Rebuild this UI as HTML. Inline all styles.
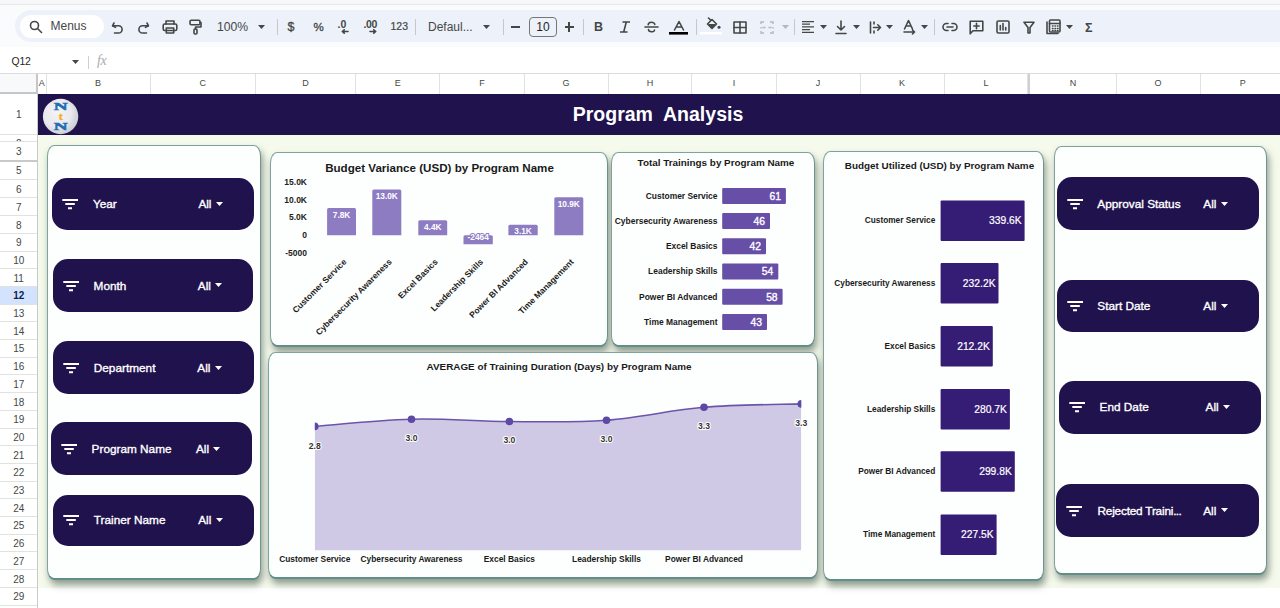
<!DOCTYPE html><html><head><meta charset="utf-8"><title>Program Analysis</title><style>
*{margin:0;padding:0;box-sizing:border-box}
html,body{width:1280px;height:608px;overflow:hidden;background:#fff;position:relative;font-family:"Liberation Sans",sans-serif}
.a{position:absolute}
.rh{position:absolute;left:0;width:37.5px;border-bottom:1px solid #e1e3e1;background:#fff;color:#444746;font-size:10px;text-align:center;overflow:hidden}
.rh span{position:absolute;left:0;right:0;top:50%;transform:translateY(-45%);line-height:12px}
.rh.sel{background:#d3e3fd;color:#0b1f4d;font-weight:bold}
.ch{position:absolute;top:73.5px;height:20px;border-right:1px solid #e1e3e1;color:#444746;font-size:9px;text-align:center;line-height:19.5px;background:#fff}
.card{position:absolute;background:#fdfffe;border:1.3px solid #7ea39c;border-right:1.6px solid #6f948e;border-bottom:2px solid #5f8f88;border-radius:7px/11px;box-shadow:2px 5px 7px rgba(60,80,70,.55)}
.chip{position:absolute;background:#20124d;border-radius:15px;color:#fff}
.chip .lb{position:absolute;font-size:11.8px;line-height:14px;-webkit-text-stroke:0.35px #fff;white-space:nowrap}
.chip .al{position:absolute;font-size:11.8px;line-height:14px;-webkit-text-stroke:0.35px #fff}
.ico{position:absolute}
.tb{position:absolute;color:#444746;white-space:nowrap}
.sep{position:absolute;top:18.7px;width:1px;height:16.6px;background:#c7c7c7}
</style></head><body>
<div class="a" style="left:0;top:0;width:1280px;height:4.5px;background:#f6f7f8;border-bottom:1px solid #e6e8ea"></div>
<div class="a" style="left:0;top:5px;width:1280px;height:42px;background:#f9fbfd"></div>
<div class="a" style="left:15px;top:10px;width:1300px;height:32px;background:#edf2fa;border-radius:16px"></div>
<div class="a" style="left:20px;top:15px;width:84px;height:23px;background:#fff;border-radius:12px"></div>
<svg class="ico" style="left:29px;top:20px" width="14" height="14" viewBox="0 0 14 14"><circle cx="5.5" cy="5.5" r="4" fill="none" stroke="#444746" stroke-width="1.6" stroke-linecap="round" stroke-linejoin="round"/><path d="M8.5 8.5 L12.5 12.5" fill="none" stroke="#444746" stroke-width="1.6" stroke-linecap="round" stroke-linejoin="round" stroke-width="1.8"/></svg>
<div class="tb" style="left:50.5px;top:18px;font-size:12px;line-height:16px;color:#444746">Menus</div>
<svg class="ico" style="left:111px;top:21px" width="13" height="13" viewBox="0 0 13 13"><path d="M3 2 L1.5 4.8 L4.5 6.3" fill="none" stroke="#444746" stroke-width="1.6" stroke-linecap="round" stroke-linejoin="round" stroke-width="1.5"/><path d="M1.8 4.8 H7.5 A3.6 3.6 0 0 1 7.5 12 H3.5" fill="none" stroke="#444746" stroke-width="1.6" stroke-linecap="round" stroke-linejoin="round" stroke-width="1.5"/></svg>
<svg class="ico" style="left:137px;top:21px" width="13" height="13" viewBox="0 0 13 13"><path d="M10 2 L11.5 4.8 L8.5 6.3" fill="none" stroke="#444746" stroke-width="1.6" stroke-linecap="round" stroke-linejoin="round" stroke-width="1.5"/><path d="M11.2 4.8 H5.5 A3.6 3.6 0 0 0 5.5 12 H9.5" fill="none" stroke="#444746" stroke-width="1.6" stroke-linecap="round" stroke-linejoin="round" stroke-width="1.5"/></svg>
<svg class="ico" style="left:162px;top:19px" width="16" height="16" viewBox="0 0 16 16"><path d="M4 5 V2 H12 V5" fill="none" stroke="#444746" stroke-width="1.6" stroke-linecap="round" stroke-linejoin="round" stroke-width="1.5"/><rect x="1.2" y="5" width="13.6" height="6.5" rx="1.5" fill="none" stroke="#444746" stroke-width="1.6" stroke-linecap="round" stroke-linejoin="round" stroke-width="1.5"/><rect x="4.3" y="9" width="7.4" height="5" fill="none" stroke="#444746" stroke-width="1.6" stroke-linecap="round" stroke-linejoin="round" stroke-width="1.5" fill="#edf2fa"/></svg>
<svg class="ico" style="left:189px;top:19px" width="13" height="16" viewBox="0 0 13 16"><rect x="1" y="1.2" width="10" height="4.5" rx="1.2" fill="none" stroke="#444746" stroke-width="1.6" stroke-linecap="round" stroke-linejoin="round" stroke-width="1.5"/><path d="M11 3.5 H12 V8 H6.5 V10" fill="none" stroke="#444746" stroke-width="1.6" stroke-linecap="round" stroke-linejoin="round" stroke-width="1.5"/><rect x="5" y="10" width="3" height="5" rx="1" fill="none" stroke="#444746" stroke-width="1.6" stroke-linecap="round" stroke-linejoin="round" stroke-width="1.5"/></svg>
<div class="tb" style="left:217px;top:19px;font-size:12.2px;line-height:16px">100%</div>
<svg class="ico" style="left:257.5px;top:25px" width="7" height="4" viewBox="0 0 7 4"><path d="M0 0 H7 L3.5 4 Z" fill="#444746"/></svg>
<div class="sep" style="left:276.5px"></div>
<div class="tb" style="left:287.5px;top:18.5px;font-size:12.5px;line-height:16px;-webkit-text-stroke:0.3px #444746">$</div>
<div class="tb" style="left:313.5px;top:18.5px;font-size:11.5px;line-height:16px;-webkit-text-stroke:0.3px #444746">%</div>
<div class="tb" style="left:337.5px;top:15.5px;font-size:10.5px;line-height:16px;font-weight:bold">.0</div>
<svg class="ico" style="left:341px;top:29px" width="8" height="5" viewBox="0 0 8 5"><path d="M7 2.5 H1.5 M3.2 0.8 L1.3 2.5 L3.2 4.2" fill="none" stroke="#444746" stroke-width="1.6" stroke-linecap="round" stroke-linejoin="round" stroke-width="1.2"/></svg>
<div class="tb" style="left:363.5px;top:15.5px;font-size:10.5px;line-height:16px;font-weight:bold;letter-spacing:-0.4px">.00</div>
<svg class="ico" style="left:369px;top:29px" width="8" height="5" viewBox="0 0 8 5"><path d="M1 2.5 H6.5 M4.8 0.8 L6.7 2.5 L4.8 4.2" fill="none" stroke="#444746" stroke-width="1.6" stroke-linecap="round" stroke-linejoin="round" stroke-width="1.2"/></svg>
<div class="tb" style="left:390.5px;top:18px;font-size:10.5px;line-height:16px;-webkit-text-stroke:0.2px #444746">123</div>
<div class="sep" style="left:414.5px"></div>
<div class="tb" style="left:428px;top:18.5px;font-size:12px;line-height:16px">Defaul...</div>
<svg class="ico" style="left:483px;top:25px" width="7" height="4" viewBox="0 0 7 4"><path d="M0 0 H7 L3.5 4 Z" fill="#444746"/></svg>
<div class="sep" style="left:503px"></div>
<div class="a" style="left:511px;top:26.3px;width:9px;height:1.3px;background:#444746"></div>
<div class="a" style="left:529px;top:17px;width:28px;height:19.5px;border:1px solid #747775;border-radius:4px;font-size:12px;line-height:19px;text-align:center;color:#1f1f1f">10</div>
<div class="a" style="left:564.5px;top:26.3px;width:9px;height:1.3px;background:#444746"></div><div class="a" style="left:568.4px;top:22.2px;width:1.3px;height:9.4px;background:#444746"></div>
<div class="sep" style="left:582.5px"></div>
<div class="tb" style="left:594px;top:18.5px;font-size:12.5px;line-height:16px;font-weight:bold">B</div>
<svg class="ico" style="left:620px;top:21px" width="10" height="12" viewBox="0 0 10 12"><path d="M3 1 H9.5 M0.5 11 H7 M6.3 1 L3.7 11" fill="none" stroke="#444746" stroke-width="1.6" stroke-linecap="round" stroke-linejoin="round" stroke-width="1.8" stroke-linecap="butt"/></svg>
<svg class="ico" style="left:644px;top:20px" width="15" height="14" viewBox="0 0 15 14"><path d="M1 7 H14" fill="none" stroke="#444746" stroke-width="1.6" stroke-linecap="round" stroke-linejoin="round" stroke-width="1.5"/><path d="M4.2 4.8 C4.2 1.5 10.8 1.5 10.8 4.5 M4.5 9.5 C4.5 12.5 10.5 12.5 10.5 10" fill="none" stroke="#444746" stroke-width="1.6" stroke-linecap="round" stroke-linejoin="round" stroke-width="1.5"/></svg>
<svg class="ico" style="left:669px;top:20px" width="20" height="15" viewBox="0 0 20 15"><path d="M5.5 10 L10 1.5 L14.5 10 M7.2 7 H12.8" fill="none" stroke="#444746" stroke-width="1.6" stroke-linecap="round" stroke-linejoin="round" stroke-width="1.5"/><rect x="0" y="12" width="19" height="2.6" fill="#000"/></svg>
<div class="sep" style="left:695.5px"></div>
<svg class="ico" style="left:700px;top:17px" width="23" height="19" viewBox="0 0 23 19"><path d="M8.5 1 L10.5 3" fill="none" stroke="#444746" stroke-width="1.6" stroke-linecap="round" stroke-linejoin="round" stroke-width="1.4"/><path d="M7.5 7 L12 2.5 L16.5 7 L12 11.5 Z" fill="none" stroke="#444746" stroke-width="1.6" stroke-linecap="round" stroke-linejoin="round" stroke-width="1.5"/><path d="M7.8 7 L16.2 7 L12 11.2 Z" fill="#444746"/><circle cx="19" cy="10.3" r="1.5" fill="#444746"/><rect x="0" y="15" width="22" height="2.4" fill="#fff"/></svg>
<svg class="ico" style="left:733px;top:21px" width="14" height="13" viewBox="0 0 14 13"><rect x="1" y="1" width="12" height="11" fill="none" stroke="#444746" stroke-width="1.6" stroke-linecap="round" stroke-linejoin="round" stroke-width="1.6"/><path d="M7 1 V12 M1 6.5 H13" fill="none" stroke="#444746" stroke-width="1.6" stroke-linecap="round" stroke-linejoin="round" stroke-width="1.6"/></svg>
<svg class="ico" style="left:760px;top:21px" width="14" height="13" viewBox="0 0 14 13"><path d="M1 3 V1 H4 M1 10 V12 H4 M13 3 V1 H10 M13 10 V12 H10 M1 6 V7.5 M13 6 V7.5 M2.5 6.5 H5.5 M11.5 6.5 H8.5" fill="none" stroke="#b4b7bb" stroke-width="1.4"/></svg>
<svg class="ico" style="left:781.5px;top:25px" width="7" height="4" viewBox="0 0 7 4"><path d="M0 0 H7 L3.5 4 Z" fill="#b4b7bb"/></svg>
<div class="sep" style="left:793.5px"></div>
<svg class="ico" style="left:801px;top:20px" width="14" height="14" viewBox="0 0 14 14"><path d="M1 1.5 H13 M1 4.2 H9 M1 6.9 H13 M1 9.6 H9 M1 12.3 H13" fill="none" stroke="#444746" stroke-width="1.25"/></svg>
<svg class="ico" style="left:819.5px;top:25px" width="7" height="4" viewBox="0 0 7 4"><path d="M0 0 H7 L3.5 4 Z" fill="#444746"/></svg>
<svg class="ico" style="left:835px;top:20px" width="12" height="15" viewBox="0 0 12 15"><path d="M6 1 V10 M2.5 6.5 L6 10 L9.5 6.5 M1 13.5 H11" fill="none" stroke="#444746" stroke-width="1.6" stroke-linecap="round" stroke-linejoin="round" stroke-width="1.6"/></svg>
<svg class="ico" style="left:852.5px;top:25px" width="7" height="4" viewBox="0 0 7 4"><path d="M0 0 H7 L3.5 4 Z" fill="#444746"/></svg>
<svg class="ico" style="left:869px;top:21px" width="13" height="13" viewBox="0 0 13 13"><path d="M1.5 1 V12 M4.5 6.5 H11.5 M8.8 3.8 L11.5 6.5 L8.8 9.2 M5 1 V3 M5 10 V12" fill="none" stroke="#444746" stroke-width="1.6" stroke-linecap="round" stroke-linejoin="round" stroke-width="1.6"/></svg>
<svg class="ico" style="left:885.5px;top:25px" width="7" height="4" viewBox="0 0 7 4"><path d="M0 0 H7 L3.5 4 Z" fill="#444746"/></svg>
<svg class="ico" style="left:903px;top:19px" width="13" height="16" viewBox="0 0 13 16"><path d="M1.5 10 L5.5 1.5 L9.5 10 M3 7 H8 M1 13 H11 M9.5 11 L11.5 13 L9.5 15" fill="none" stroke="#444746" stroke-width="1.6" stroke-linecap="round" stroke-linejoin="round" stroke-width="1.5"/></svg>
<svg class="ico" style="left:920.5px;top:25px" width="7" height="4" viewBox="0 0 7 4"><path d="M0 0 H7 L3.5 4 Z" fill="#444746"/></svg>
<div class="sep" style="left:934.3px"></div>
<svg class="ico" style="left:942px;top:22px" width="16" height="10" viewBox="0 0 16 10"><path d="M6 1.5 H4.5 A3.5 3.5 0 0 0 4.5 8.5 H6 M10 1.5 H11.5 A3.5 3.5 0 0 1 11.5 8.5 H10 M5 5 H11" fill="none" stroke="#444746" stroke-width="1.6" stroke-linecap="round" stroke-linejoin="round" stroke-width="1.7"/></svg>
<svg class="ico" style="left:969px;top:20px" width="15" height="15" viewBox="0 0 15 15"><path d="M1.2 1.2 H13.8 V10.8 H4 L1.2 13.8 Z" fill="none" stroke="#444746" stroke-width="1.6" stroke-linecap="round" stroke-linejoin="round" stroke-width="1.5"/><path d="M7.5 3.3 V8.7 M4.8 6 H10.2" fill="none" stroke="#444746" stroke-width="1.6" stroke-linecap="round" stroke-linejoin="round" stroke-width="1.6"/></svg>
<svg class="ico" style="left:996px;top:20px" width="14" height="14" viewBox="0 0 14 14"><rect x="1" y="1" width="12" height="12" rx="1.2" fill="none" stroke="#444746" stroke-width="1.6" stroke-linecap="round" stroke-linejoin="round" stroke-width="1.5"/><path d="M4.3 5.5 V10 M7 3.5 V10 M9.7 7.5 V10" fill="none" stroke="#444746" stroke-width="1.6" stroke-linecap="round" stroke-linejoin="round" stroke-width="1.5"/></svg>
<svg class="ico" style="left:1023px;top:21px" width="12" height="13" viewBox="0 0 12 13"><path d="M1 1.2 H11 L7 6.5 V12 H5 V6.5 Z" fill="none" stroke="#444746" stroke-width="1.6" stroke-linecap="round" stroke-linejoin="round" stroke-width="1.5"/></svg>
<svg class="ico" style="left:1046px;top:19px" width="15" height="16" viewBox="0 0 15 16"><path d="M1 3 V14.5 H12" fill="none" stroke="#444746" stroke-width="1.6" stroke-linecap="round" stroke-linejoin="round" stroke-width="1.5"/><rect x="3.5" y="1" width="10.5" height="12" rx="1" fill="none" stroke="#444746" stroke-width="1.6" stroke-linecap="round" stroke-linejoin="round" stroke-width="1.5"/><path d="M3.5 4.5 H14 M6.5 7 H7 M9 7 H9.5 M11.5 7 H12 M6.5 9.5 H7 M9 9.5 H9.5 M11.5 9.5 H12 M6.5 11.5 H7 M9 11.5 H9.5 M11.5 11.5 H12" fill="none" stroke="#444746" stroke-width="1.6" stroke-linecap="round" stroke-linejoin="round" stroke-width="1.6"/></svg>
<svg class="ico" style="left:1066px;top:25px" width="7" height="4" viewBox="0 0 7 4"><path d="M0 0 H7 L3.5 4 Z" fill="#444746"/></svg>
<div class="tb" style="left:1085px;top:19.5px;font-size:12.5px;line-height:16px;font-weight:bold">&#931;</div>
<div class="tb" style="left:11.5px;top:54.8px;font-size:10.4px;line-height:13px;color:#1f1f1f;letter-spacing:-0.2px">Q12</div>
<svg class="ico" style="left:71.5px;top:59.5px" width="7" height="4" viewBox="0 0 7 4"><path d="M0 0 H7 L3.5 4 Z" fill="#444746"/></svg>
<div class="a" style="left:87.5px;top:55.7px;width:1px;height:13px;background:#d0d0d0"></div>
<div class="tb" style="left:97px;top:53px;font-size:14px;line-height:15px;font-family:'Liberation Serif',serif;font-style:italic;color:#a8acb0;letter-spacing:-0.5px">fx</div>
<div class="a" style="left:0;top:73px;width:1280px;height:1px;background:#dadce0"></div>
<div class="ch" style="left:38px;width:8.5px">A</div>
<div class="ch" style="left:46.5px;width:104.0px">B</div>
<div class="ch" style="left:150.5px;width:105.30000000000001px">C</div>
<div class="ch" style="left:255.8px;width:100.39999999999998px">D</div>
<div class="ch" style="left:356.2px;width:84.30000000000001px">E</div>
<div class="ch" style="left:440.5px;width:84.0px">F</div>
<div class="ch" style="left:524.5px;width:84.20000000000005px">G</div>
<div class="ch" style="left:608.7px;width:83.79999999999995px">H</div>
<div class="ch" style="left:692.5px;width:84.0px">I</div>
<div class="ch" style="left:776.5px;width:84.0px">J</div>
<div class="ch" style="left:860.5px;width:84.0px">K</div>
<div class="ch" style="left:944.5px;width:83.79999999999995px">L</div>
<div class="ch" style="left:1030.5px;width:86.0px">N</div>
<div class="ch" style="left:1116.5px;width:84.0px">O</div>
<div class="ch" style="left:1200.5px;width:85.5px">P</div>
<div class="a" style="left:1028.3px;top:73.5px;width:2.2px;height:20px;border-left:1px solid #d0d0d0;border-right:1px solid #d0d0d0;background:#fff"></div>
<div class="a" style="left:0;top:73.5px;width:38px;height:20px;background:#f8f9fa;border-right:2.5px solid #c4c7c5;border-bottom:2.5px solid #c4c7c5"></div>
<div class="rh" style="top:93.5px;height:41.3px"><span>1</span></div>
<div class="rh" style="top:134.8px;height:7.3px"><span style="top:3px;transform:none">2</span></div>
<div class="rh" style="top:142.1px;height:18.8px"><span>3</span></div>
<div class="rh" style="top:160.9px;height:19.4px"><span>5</span></div>
<div class="rh" style="top:180.3px;height:18.2px"><span>6</span></div>
<div class="rh" style="top:198.5px;height:17.7px"><span>7</span></div>
<div class="rh" style="top:216.2px;height:17.7px"><span>8</span></div>
<div class="rh" style="top:233.9px;height:17.7px"><span>9</span></div>
<div class="rh" style="top:251.6px;height:17.7px"><span>10</span></div>
<div class="rh" style="top:269.3px;height:17.7px"><span>11</span></div>
<div class="rh sel" style="top:287.0px;height:17.7px"><span>12</span></div>
<div class="rh" style="top:304.7px;height:17.7px"><span>13</span></div>
<div class="rh" style="top:322.4px;height:17.7px"><span>14</span></div>
<div class="rh" style="top:340.1px;height:17.7px"><span>15</span></div>
<div class="rh" style="top:357.8px;height:17.7px"><span>16</span></div>
<div class="rh" style="top:375.5px;height:17.7px"><span>17</span></div>
<div class="rh" style="top:393.2px;height:17.7px"><span>18</span></div>
<div class="rh" style="top:410.9px;height:17.7px"><span>19</span></div>
<div class="rh" style="top:428.6px;height:17.7px"><span>20</span></div>
<div class="rh" style="top:446.3px;height:17.7px"><span>21</span></div>
<div class="rh" style="top:464.0px;height:17.7px"><span>22</span></div>
<div class="rh" style="top:481.7px;height:17.7px"><span>23</span></div>
<div class="rh" style="top:499.4px;height:17.7px"><span>24</span></div>
<div class="rh" style="top:517.1px;height:17.7px"><span>25</span></div>
<div class="rh" style="top:534.8px;height:17.7px"><span>26</span></div>
<div class="rh" style="top:552.5px;height:17.7px"><span>27</span></div>
<div class="rh" style="top:570.2px;height:17.7px"><span>28</span></div>
<div class="rh" style="top:587.9px;height:17.7px"><span>29</span></div>
<div class="a" style="left:37px;top:93.5px;width:1px;height:520px;background:#c8cacc"></div>
<div class="a" style="left:0;top:159.9px;width:37px;height:2px;background:#c7c9cb"></div>
<div class="a" style="left:38px;top:93.5px;width:1242px;height:494.1px;background:#f5faec"></div>
<div class="a" style="left:38px;top:587.6px;width:1242px;height:30px;background:#fff"></div>
<div class="a" style="left:38px;top:93.5px;width:1242px;height:41.2px;background:#20124d"></div>
<div class="a" style="left:500px;top:103px;width:316px;text-align:center;color:#fff;font-weight:bold;font-size:19.5px;line-height:22px;white-space:pre">Program  Analysis</div>
<svg class="ico" style="left:42px;top:98px" width="38" height="38" viewBox="0 0 38 38">
<defs><radialGradient id="lg" cx="40%" cy="40%" r="65%"><stop offset="0" stop-color="#f4f4f6"/><stop offset="0.6" stop-color="#e9e9ee"/><stop offset="1" stop-color="#c9c9d2"/></radialGradient></defs>
<circle cx="18.6" cy="18.5" r="17.7" fill="url(#lg)"/>
<text transform="translate(18.6,11.9) scale(1.75,1)" text-anchor="middle" font-family="Liberation Serif" font-weight="bold" font-size="11" fill="#1f6fb2" stroke="#1f6fb2" stroke-width="0.5">N</text>
<text transform="translate(18.8,22.3) scale(1.2,1)" text-anchor="middle" font-family="Liberation Serif" font-weight="bold" font-size="10" fill="#f1b320" stroke="#f1b320" stroke-width="0.4">t</text>
<text transform="translate(18.6,32.4) scale(1.75,1)" text-anchor="middle" font-family="Liberation Serif" font-weight="bold" font-size="11" fill="#1f6fb2" stroke="#1f6fb2" stroke-width="0.5">N</text>
</svg>
<div class="card" style="left:47px;top:144.8px;width:214px;height:435.2px"></div>
<div class="card" style="left:1053.5px;top:145.6px;width:213.5px;height:429.9px"></div>
<div class="card" style="left:270px;top:152px;width:337.5px;height:195px"></div>
<div class="card" style="left:611px;top:152px;width:204px;height:195px"></div>
<div class="card" style="left:268px;top:352px;width:549.5px;height:226.5px"></div>
<div class="card" style="left:823.3px;top:150.6px;width:221.20000000000005px;height:430.4px"></div>
<div class="chip" style="left:51.7px;top:177.5px;width:202.10000000000002px;height:52.5px"><svg class="ico" style="left:10.699999999999996px;top:21.25px" width="17" height="11" viewBox="0 0 17 11"><path d="M0.3 1 H16 M3.3 5 H12.8 M6 9.3 H10" stroke="#fff" stroke-width="2.1"/></svg><div class="lb" style="left:41.2px;top:19.25px">Year</div><div class="al" style="left:146.7px;top:19.25px">All</div><svg class="ico" style="left:164.2px;top:24.05px" width="7" height="4" viewBox="0 0 7 4"><path d="M0 0 H7 L3.5 4 Z" fill="#fff"/></svg></div>
<div class="chip" style="left:53px;top:259.3px;width:200px;height:52.69999999999999px"><svg class="ico" style="left:9.799999999999997px;top:21.349999999999994px" width="17" height="11" viewBox="0 0 17 11"><path d="M0.3 1 H16 M3.3 5 H12.8 M6 9.3 H10" stroke="#fff" stroke-width="2.1"/></svg><div class="lb" style="left:40.599999999999994px;top:19.349999999999994px">Month</div><div class="al" style="left:144.8px;top:19.349999999999994px">All</div><svg class="ico" style="left:162.3px;top:24.149999999999995px" width="7" height="4" viewBox="0 0 7 4"><path d="M0 0 H7 L3.5 4 Z" fill="#fff"/></svg></div>
<div class="chip" style="left:52.9px;top:341px;width:200.9px;height:53.39999999999998px"><svg class="ico" style="left:9.800000000000004px;top:21.69999999999999px" width="17" height="11" viewBox="0 0 17 11"><path d="M0.3 1 H16 M3.3 5 H12.8 M6 9.3 H10" stroke="#fff" stroke-width="2.1"/></svg><div class="lb" style="left:40.9px;top:19.69999999999999px">Department</div><div class="al" style="left:144.4px;top:19.69999999999999px">All</div><svg class="ico" style="left:161.9px;top:24.49999999999999px" width="7" height="4" viewBox="0 0 7 4"><path d="M0 0 H7 L3.5 4 Z" fill="#fff"/></svg></div>
<div class="chip" style="left:50.7px;top:422.4px;width:201.3px;height:52.900000000000034px"><svg class="ico" style="left:10.599999999999994px;top:21.450000000000017px" width="17" height="11" viewBox="0 0 17 11"><path d="M0.3 1 H16 M3.3 5 H12.8 M6 9.3 H10" stroke="#fff" stroke-width="2.1"/></svg><div class="lb" style="left:40.89999999999999px;top:19.450000000000017px">Program Name</div><div class="al" style="left:145.3px;top:19.450000000000017px">All</div><svg class="ico" style="left:162.8px;top:24.250000000000018px" width="7" height="4" viewBox="0 0 7 4"><path d="M0 0 H7 L3.5 4 Z" fill="#fff"/></svg></div>
<div class="chip" style="left:52.9px;top:495.3px;width:200.9px;height:50.30000000000001px"><svg class="ico" style="left:9.800000000000004px;top:20.150000000000006px" width="17" height="11" viewBox="0 0 17 11"><path d="M0.3 1 H16 M3.3 5 H12.8 M6 9.3 H10" stroke="#fff" stroke-width="2.1"/></svg><div class="lb" style="left:40.9px;top:18.150000000000006px">Trainer Name</div><div class="al" style="left:145.29999999999998px;top:18.150000000000006px">All</div><svg class="ico" style="left:162.79999999999998px;top:22.950000000000006px" width="7" height="4" viewBox="0 0 7 4"><path d="M0 0 H7 L3.5 4 Z" fill="#fff"/></svg></div>
<div class="chip" style="left:1057px;top:177.4px;width:201.5px;height:53.0px"><svg class="ico" style="left:10px;top:21.5px" width="17" height="11" viewBox="0 0 17 11"><path d="M0.3 1 H16 M3.3 5 H12.8 M6 9.3 H10" stroke="#fff" stroke-width="2.1"/></svg><div class="lb" style="left:40.299999999999955px;top:19.5px">Approval Status</div><div class="al" style="left:146.29999999999995px;top:19.5px">All</div><svg class="ico" style="left:163.79999999999995px;top:24.3px" width="7" height="4" viewBox="0 0 7 4"><path d="M0 0 H7 L3.5 4 Z" fill="#fff"/></svg></div>
<div class="chip" style="left:1057px;top:280px;width:201.5px;height:52.19999999999999px"><svg class="ico" style="left:10px;top:21.099999999999994px" width="17" height="11" viewBox="0 0 17 11"><path d="M0.3 1 H16 M3.3 5 H12.8 M6 9.3 H10" stroke="#fff" stroke-width="2.1"/></svg><div class="lb" style="left:40.299999999999955px;top:19.099999999999994px">Start Date</div><div class="al" style="left:146.29999999999995px;top:19.099999999999994px">All</div><svg class="ico" style="left:163.79999999999995px;top:23.899999999999995px" width="7" height="4" viewBox="0 0 7 4"><path d="M0 0 H7 L3.5 4 Z" fill="#fff"/></svg></div>
<div class="chip" style="left:1058.9px;top:380.8px;width:202.19999999999982px;height:53.0px"><svg class="ico" style="left:10.099999999999909px;top:21.5px" width="17" height="11" viewBox="0 0 17 11"><path d="M0.3 1 H16 M3.3 5 H12.8 M6 9.3 H10" stroke="#fff" stroke-width="2.1"/></svg><div class="lb" style="left:40.69999999999982px;top:19.5px">End Date</div><div class="al" style="left:146.69999999999982px;top:19.5px">All</div><svg class="ico" style="left:164.19999999999982px;top:24.3px" width="7" height="4" viewBox="0 0 7 4"><path d="M0 0 H7 L3.5 4 Z" fill="#fff"/></svg></div>
<div class="chip" style="left:1056.4px;top:484px;width:202.29999999999995px;height:53px"><svg class="ico" style="left:10.099999999999909px;top:21.5px" width="17" height="11" viewBox="0 0 17 11"><path d="M0.3 1 H16 M3.3 5 H12.8 M6 9.3 H10" stroke="#fff" stroke-width="2.1"/></svg><div class="lb" style="left:41.09999999999991px;top:19.5px"><span style="letter-spacing:-0.2px">Rejected Traini</span><span style="letter-spacing:-0.6px">...</span></div><div class="al" style="left:146.79999999999995px;top:19.5px">All</div><svg class="ico" style="left:164.29999999999995px;top:24.3px" width="7" height="4" viewBox="0 0 7 4"><path d="M0 0 H7 L3.5 4 Z" fill="#fff"/></svg></div>
<svg class="a" style="left:0;top:0" width="1280" height="608" viewBox="0 0 1280 608"><text x="439.5" y="171.8" text-anchor="middle" font-family="Liberation Sans" font-weight="bold" font-size="11.6" fill="#1a1a1a">Budget Variance (USD) by Program Name</text><text x="307" y="185.20000000000002" text-anchor="end" font-family="Liberation Sans" font-weight="bold" font-size="8.5" fill="#222">15.0K</text><text x="307" y="202.6" text-anchor="end" font-family="Liberation Sans" font-weight="bold" font-size="8.5" fill="#222">10.0K</text><text x="307" y="220.0" text-anchor="end" font-family="Liberation Sans" font-weight="bold" font-size="8.5" fill="#222">5.0K</text><text x="307" y="237.6" text-anchor="end" font-family="Liberation Sans" font-weight="bold" font-size="8.5" fill="#222">0</text><text x="307" y="255.6" text-anchor="end" font-family="Liberation Sans" font-weight="bold" font-size="8.5" fill="#222">-5000</text><path d="M327.1 235.2 V209.5 Q327.1 208 328.6 208 H354.5 Q356 208 356 209.5 V235.2 Z" fill="#8e7cc3"/><text x="341.55" y="217.5" text-anchor="middle" font-family="Liberation Sans" font-weight="bold" font-size="8.3" fill="#fff" stroke="#8e7cc3" stroke-width="2" paint-order="stroke">7.8K</text><text transform="translate(347.05,262.5) rotate(-45)" text-anchor="end" font-family="Liberation Sans" font-weight="bold" font-size="8.5" fill="#1a1a1a">Customer Service</text><path d="M372.3 235.2 V191.1 Q372.3 189.6 373.8 189.6 H399.8 Q401.3 189.6 401.3 191.1 V235.2 Z" fill="#8e7cc3"/><text x="386.8" y="199.1" text-anchor="middle" font-family="Liberation Sans" font-weight="bold" font-size="8.3" fill="#fff" stroke="#8e7cc3" stroke-width="2" paint-order="stroke">13.0K</text><text transform="translate(392.3,262.5) rotate(-45)" text-anchor="end" font-family="Liberation Sans" font-weight="bold" font-size="8.5" fill="#1a1a1a">Cybersecurity Awareness</text><path d="M418.3 235.2 V221.8 Q418.3 220.3 419.8 220.3 H445.7 Q447.2 220.3 447.2 221.8 V235.2 Z" fill="#8e7cc3"/><text x="432.75" y="229.8" text-anchor="middle" font-family="Liberation Sans" font-weight="bold" font-size="8.3" fill="#fff" stroke="#8e7cc3" stroke-width="2" paint-order="stroke">4.4K</text><text transform="translate(438.25,262.5) rotate(-45)" text-anchor="end" font-family="Liberation Sans" font-weight="bold" font-size="8.5" fill="#1a1a1a">Excel Basics</text><path d="M463.5 244.2 V236.7 Q463.5 235.2 465.0 235.2 H491.3 Q492.8 235.2 492.8 236.7 V244.2 Z" fill="#8e7cc3"/><text x="478.15" y="240" text-anchor="middle" font-family="Liberation Sans" font-weight="bold" font-size="8.3" fill="#fff" stroke="#8e7cc3" stroke-width="2" paint-order="stroke">-2464</text><text transform="translate(483.65,262.5) rotate(-45)" text-anchor="end" font-family="Liberation Sans" font-weight="bold" font-size="8.5" fill="#1a1a1a">Leadership Skills</text><path d="M508.4 235.2 V226.2 Q508.4 224.7 509.9 224.7 H536.2 Q537.7 224.7 537.7 226.2 V235.2 Z" fill="#8e7cc3"/><text x="523.05" y="234.2" text-anchor="middle" font-family="Liberation Sans" font-weight="bold" font-size="8.3" fill="#fff" stroke="#8e7cc3" stroke-width="2" paint-order="stroke">3.1K</text><text transform="translate(528.55,262.5) rotate(-45)" text-anchor="end" font-family="Liberation Sans" font-weight="bold" font-size="8.5" fill="#1a1a1a">Power BI Advanced</text><path d="M554.3 235.2 V198.7 Q554.3 197.2 555.8 197.2 H581.8 Q583.3 197.2 583.3 198.7 V235.2 Z" fill="#8e7cc3"/><text x="568.8" y="206.7" text-anchor="middle" font-family="Liberation Sans" font-weight="bold" font-size="8.3" fill="#fff" stroke="#8e7cc3" stroke-width="2" paint-order="stroke">10.9K</text><text transform="translate(574.3,262.5) rotate(-45)" text-anchor="end" font-family="Liberation Sans" font-weight="bold" font-size="8.5" fill="#1a1a1a">Time Management</text><text x="716" y="165.8" text-anchor="middle" font-family="Liberation Sans" font-weight="bold" font-size="9.9" fill="#1a1a1a">Total Trainings by Program Name</text><rect x="722.2" y="188.1" width="63.69999999999993" height="16" rx="1" fill="#674ea7"/><text x="780.9" y="199.9" text-anchor="end" font-family="Liberation Sans" font-size="10.3" fill="#fff" stroke="#fff" stroke-width="0.35">61</text><text x="717.5" y="199.0" text-anchor="end" font-family="Liberation Sans" font-weight="bold" font-size="8.45" fill="#1a1a1a">Customer Service</text><rect x="722.2" y="213" width="47.799999999999955" height="16" rx="1" fill="#674ea7"/><text x="765" y="224.8" text-anchor="end" font-family="Liberation Sans" font-size="10.3" fill="#fff" stroke="#fff" stroke-width="0.35">46</text><text x="717.5" y="223.9" text-anchor="end" font-family="Liberation Sans" font-weight="bold" font-size="8.45" fill="#1a1a1a">Cybersecurity Awareness</text><rect x="722.2" y="238.3" width="43.799999999999955" height="16" rx="1" fill="#674ea7"/><text x="761" y="250.10000000000002" text-anchor="end" font-family="Liberation Sans" font-size="10.3" fill="#fff" stroke="#fff" stroke-width="0.35">42</text><text x="717.5" y="249.20000000000002" text-anchor="end" font-family="Liberation Sans" font-weight="bold" font-size="8.45" fill="#1a1a1a">Excel Basics</text><rect x="722.2" y="263.5" width="56.09999999999991" height="16" rx="1" fill="#674ea7"/><text x="773.3" y="275.3" text-anchor="end" font-family="Liberation Sans" font-size="10.3" fill="#fff" stroke="#fff" stroke-width="0.35">54</text><text x="717.5" y="274.4" text-anchor="end" font-family="Liberation Sans" font-weight="bold" font-size="8.45" fill="#1a1a1a">Leadership Skills</text><rect x="722.2" y="288.8" width="60.39999999999998" height="16" rx="1" fill="#674ea7"/><text x="777.6" y="300.6" text-anchor="end" font-family="Liberation Sans" font-size="10.3" fill="#fff" stroke="#fff" stroke-width="0.35">58</text><text x="717.5" y="299.7" text-anchor="end" font-family="Liberation Sans" font-weight="bold" font-size="8.45" fill="#1a1a1a">Power BI Advanced</text><rect x="722.2" y="314" width="44.799999999999955" height="16" rx="1" fill="#674ea7"/><text x="762" y="325.8" text-anchor="end" font-family="Liberation Sans" font-size="10.3" fill="#fff" stroke="#fff" stroke-width="0.35">43</text><text x="717.5" y="324.9" text-anchor="end" font-family="Liberation Sans" font-weight="bold" font-size="8.45" fill="#1a1a1a">Time Management</text><text x="939.5" y="169.2" text-anchor="middle" font-family="Liberation Sans" font-weight="bold" font-size="9.9" fill="#1a1a1a">Budget Utilized (USD) by Program Name</text><rect x="940.6" y="200.5" width="83.99999999999989" height="40.5" rx="1" fill="#351c75"/><text x="1021.5999999999999" y="224.2" text-anchor="end" font-family="Liberation Sans" font-size="10.3" fill="#fff" stroke="#fff" stroke-width="0.2">339.6K</text><text x="935.3" y="223.4" text-anchor="end" font-family="Liberation Sans" font-weight="bold" font-size="8.3" fill="#1a1a1a">Customer Service</text><rect x="940.6" y="263" width="57.89999999999998" height="40.5" rx="1" fill="#351c75"/><text x="995.5" y="286.7" text-anchor="end" font-family="Liberation Sans" font-size="10.3" fill="#fff" stroke="#fff" stroke-width="0.2">232.2K</text><text x="935.3" y="285.9" text-anchor="end" font-family="Liberation Sans" font-weight="bold" font-size="8.3" fill="#1a1a1a">Cybersecurity Awareness</text><rect x="940.6" y="326" width="52.19999999999993" height="40.5" rx="1" fill="#351c75"/><text x="989.8" y="349.7" text-anchor="end" font-family="Liberation Sans" font-size="10.3" fill="#fff" stroke="#fff" stroke-width="0.2">212.2K</text><text x="935.3" y="348.9" text-anchor="end" font-family="Liberation Sans" font-weight="bold" font-size="8.3" fill="#1a1a1a">Excel Basics</text><rect x="940.6" y="388.9" width="69.29999999999995" height="40.5" rx="1" fill="#351c75"/><text x="1006.9" y="412.59999999999997" text-anchor="end" font-family="Liberation Sans" font-size="10.3" fill="#fff" stroke="#fff" stroke-width="0.2">280.7K</text><text x="935.3" y="411.79999999999995" text-anchor="end" font-family="Liberation Sans" font-weight="bold" font-size="8.3" fill="#1a1a1a">Leadership Skills</text><rect x="940.6" y="451.3" width="74.19999999999993" height="40.5" rx="1" fill="#351c75"/><text x="1011.8" y="475.0" text-anchor="end" font-family="Liberation Sans" font-size="10.3" fill="#fff" stroke="#fff" stroke-width="0.2">299.8K</text><text x="935.3" y="474.2" text-anchor="end" font-family="Liberation Sans" font-weight="bold" font-size="8.3" fill="#1a1a1a">Power BI Advanced</text><rect x="940.6" y="514.5" width="56.0" height="40.5" rx="1" fill="#351c75"/><text x="993.6" y="538.2" text-anchor="end" font-family="Liberation Sans" font-size="10.3" fill="#fff" stroke="#fff" stroke-width="0.2">227.5K</text><text x="935.3" y="537.4" text-anchor="end" font-family="Liberation Sans" font-weight="bold" font-size="8.3" fill="#1a1a1a">Time Management</text><text x="559" y="370" text-anchor="middle" font-family="Liberation Sans" font-weight="bold" font-size="9.9" fill="#1a1a1a">AVERAGE of Training Duration (Days) by Program Name</text><defs><clipPath id="pc"><rect x="314.8" y="380" width="486.5" height="171"/></clipPath></defs><g clip-path="url(#pc)"><path d="M314.8 426.4 C332.2 425.1 376.5 420.1 411.5 419.2 C446.5 418.3 474.3 421.3 509.4 421.5 C544.5 421.7 571.5 422.8 606.5 420.2 C641.5 417.6 668.9 410.2 704 407.3 C739.1 404.4 783.8 404.5 801.3 403.9 V550.2 H314.8 Z" fill="#d0c9e5"/><path d="M314.8 426.4 C332.2 425.1 376.5 420.1 411.5 419.2 C446.5 418.3 474.3 421.3 509.4 421.5 C544.5 421.7 571.5 422.8 606.5 420.2 C641.5 417.6 668.9 410.2 704 407.3 C739.1 404.4 783.8 404.5 801.3 403.9" fill="none" stroke="#6a55aa" stroke-width="1.6"/><circle cx="314.8" cy="426.4" r="3.8" fill="#5e48a6"/><circle cx="411.5" cy="419.2" r="3.8" fill="#5e48a6"/><circle cx="509.4" cy="421.5" r="3.8" fill="#5e48a6"/><circle cx="606.5" cy="420.2" r="3.8" fill="#5e48a6"/><circle cx="704" cy="407.3" r="3.8" fill="#5e48a6"/><circle cx="801.3" cy="403.9" r="3.8" fill="#5e48a6"/></g><text x="314.8" y="448.5" text-anchor="middle" font-family="Liberation Sans" font-weight="bold" font-size="8.6" fill="#333" stroke="#fff" stroke-width="2" paint-order="stroke">2.8</text><text x="411.5" y="441" text-anchor="middle" font-family="Liberation Sans" font-weight="bold" font-size="8.6" fill="#333" stroke="#fff" stroke-width="2" paint-order="stroke">3.0</text><text x="509.4" y="443" text-anchor="middle" font-family="Liberation Sans" font-weight="bold" font-size="8.6" fill="#333" stroke="#fff" stroke-width="2" paint-order="stroke">3.0</text><text x="606.5" y="442" text-anchor="middle" font-family="Liberation Sans" font-weight="bold" font-size="8.6" fill="#333" stroke="#fff" stroke-width="2" paint-order="stroke">3.0</text><text x="704" y="429.1" text-anchor="middle" font-family="Liberation Sans" font-weight="bold" font-size="8.6" fill="#333" stroke="#fff" stroke-width="2" paint-order="stroke">3.3</text><text x="801.3" y="426.3" text-anchor="middle" font-family="Liberation Sans" font-weight="bold" font-size="8.6" fill="#333" stroke="#fff" stroke-width="2" paint-order="stroke">3.3</text><text x="314.8" y="561.6" text-anchor="middle" font-family="Liberation Sans" font-weight="bold" font-size="8.4" fill="#1a1a1a">Customer Service</text><text x="411.5" y="561.6" text-anchor="middle" font-family="Liberation Sans" font-weight="bold" font-size="8.4" fill="#1a1a1a">Cybersecurity Awareness</text><text x="509.4" y="561.6" text-anchor="middle" font-family="Liberation Sans" font-weight="bold" font-size="8.4" fill="#1a1a1a">Excel Basics</text><text x="606.5" y="561.6" text-anchor="middle" font-family="Liberation Sans" font-weight="bold" font-size="8.4" fill="#1a1a1a">Leadership Skills</text><text x="704" y="561.6" text-anchor="middle" font-family="Liberation Sans" font-weight="bold" font-size="8.4" fill="#1a1a1a">Power BI Advanced</text></svg>
</body></html>
